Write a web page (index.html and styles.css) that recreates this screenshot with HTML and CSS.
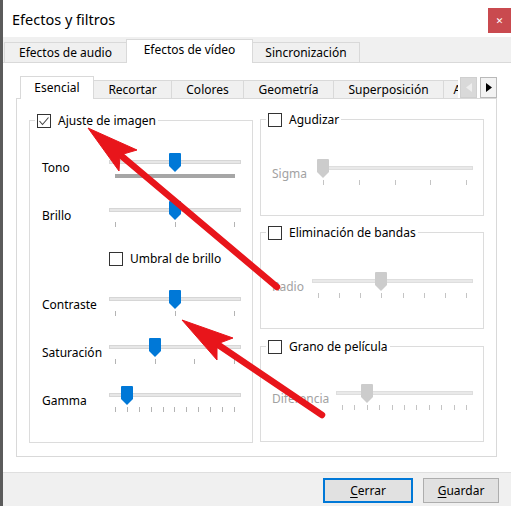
FILE: index.html
```html
<!DOCTYPE html>
<html lang="es">
<head>
<meta charset="utf-8">
<title>Efectos y filtros</title>
<link rel="stylesheet" href="styles.css">
</head>
<body>
<div class="win">
  <div class="titlebar">
    <span class="title">Efectos y filtros</span>
    <div class="close">&#x2715;</div>
  </div>
  <div class="tabs-top">
    <div class="ttab w-audio">Efectos de audio</div>
    <div class="ttab sel w-video">Efectos de vídeo</div>
    <div class="ttab w-sinc">Sincronización</div>
  </div>
  <div class="page">
    <div class="itabs">
      <div class="itab-strip">
        <div class="itab sel w-es">Esencial</div>
        <div class="itab w-rec">Recortar</div>
        <div class="itab w-col">Colores</div>
        <div class="itab w-geo">Geometría</div>
        <div class="itab w-sup">Superposición</div>
        <div class="itab w-atm">AtmoLight</div>
      </div>
      <div class="sbtn dis"><svg width="6" height="9" viewBox="0 0 6 9"><polygon points="6,0 6,9 0,4.5"/></svg></div>
      <div class="sbtn"><svg width="6" height="9" viewBox="0 0 6 9"><polygon points="0,0 0,9 6,4.5"/></svg></div>
    </div>
    <div class="pane">
      <div class="col-left">
        <div class="group g-main">
          <div class="legend">
            <span class="cb"><svg width="12" height="12" viewBox="0 0 12 12"><polyline points="1.5,6 4.5,9.5 10.5,2.5" fill="none" stroke="#444" stroke-width="1.1"/></svg></span>
            <span>Ajuste de imagen</span>
          </div>
          <div class="rows">
            <div class="srow">
              <span class="lbl">Tono</span>
              <div class="slider">
                <div class="groove"></div>
                <div class="ticks dense"></div>
                <svg class="handle" style="left:60px" viewBox="0 0 12 19"><path d="M1 0H11A1 1 0 0 1 12 1V13L6 19L0 13V1A1 1 0 0 1 1 0Z"/></svg>
              </div>
            </div>
            <div class="srow">
              <span class="lbl">Brillo</span>
              <div class="slider">
                <div class="groove"></div>
                <div class="ticks"><i></i><i></i><i></i></div>
                <svg class="handle" style="left:60px" viewBox="0 0 12 19"><path d="M1 0H11A1 1 0 0 1 12 1V13L6 19L0 13V1A1 1 0 0 1 1 0Z"/></svg>
              </div>
            </div>
            <div class="crow">
              <span class="cb"></span>
              <span>Umbral de brillo</span>
            </div>
            <div class="srow">
              <span class="lbl">Contraste</span>
              <div class="slider">
                <div class="groove"></div>
                <div class="ticks"><i></i><i></i><i></i></div>
                <svg class="handle" style="left:60px" viewBox="0 0 12 19"><path d="M1 0H11A1 1 0 0 1 12 1V13L6 19L0 13V1A1 1 0 0 1 1 0Z"/></svg>
              </div>
            </div>
            <div class="srow">
              <span class="lbl">Saturación</span>
              <div class="slider">
                <div class="groove"></div>
                <div class="ticks"><i></i><i></i><i></i><i></i></div>
                <svg class="handle" style="left:40px" viewBox="0 0 12 19"><path d="M1 0H11A1 1 0 0 1 12 1V13L6 19L0 13V1A1 1 0 0 1 1 0Z"/></svg>
              </div>
            </div>
            <div class="srow">
              <span class="lbl">Gamma</span>
              <div class="slider">
                <div class="groove"></div>
                <div class="ticks"><i></i><i></i><i></i><i></i><i></i><i></i><i></i><i></i><i></i><i></i><i></i></div>
                <svg class="handle" style="left:12px" viewBox="0 0 12 19"><path d="M1 0H11A1 1 0 0 1 12 1V13L6 19L0 13V1A1 1 0 0 1 1 0Z"/></svg>
              </div>
            </div>
          </div>
        </div>
      </div>
      <div class="col-right">
        <div class="group g-agu">
          <div class="legend"><span class="cb"></span><span>Agudizar</span></div>
          <div class="srow r">
            <span class="lbl dim w-sig">Sigma</span>
            <div class="slider off">
              <div class="groove"></div>
              <div class="ticks"><i></i><i></i><i></i><i></i><i></i></div>
              <svg class="handle" style="left:0px" viewBox="0 0 12 19"><path d="M1 0H11A1 1 0 0 1 12 1V13L6 19L0 13V1A1 1 0 0 1 1 0Z"/></svg>
            </div>
          </div>
        </div>
        <div class="group g-band">
          <div class="legend"><span class="cb"></span><span>Eliminación de bandas</span></div>
          <div class="srow r">
            <span class="lbl dim w-rad">Radio</span>
            <div class="slider off">
              <div class="groove"></div>
              <div class="ticks"><i></i><i></i><i></i><i></i><i></i><i></i><i></i><i></i></div>
              <svg class="handle" style="left:63px" viewBox="0 0 12 19"><path d="M1 0H11A1 1 0 0 1 12 1V13L6 19L0 13V1A1 1 0 0 1 1 0Z"/></svg>
            </div>
          </div>
        </div>
        <div class="group g-grano">
          <div class="legend"><span class="cb"></span><span>Grano de película</span></div>
          <div class="srow r">
            <span class="lbl dim w-dif">Diferencia</span>
            <div class="slider off">
              <div class="groove"></div>
              <div class="ticks"><i></i><i></i><i></i><i></i><i></i><i></i><i></i><i></i><i></i><i></i><i></i></div>
              <svg class="handle" style="left:25px" viewBox="0 0 12 19"><path d="M1 0H11A1 1 0 0 1 12 1V13L6 19L0 13V1A1 1 0 0 1 1 0Z"/></svg>
            </div>
          </div>
        </div>
      </div>
    </div>
  </div>
  <div class="footer">
    <div class="btn def"><span><u>C</u>errar</span></div>
    <div class="btn"><span><u>G</u>uardar</span></div>
  </div>
</div>
<svg class="arrows" width="511" height="506" viewBox="0 0 511 506">
  <g fill="#e8151b" stroke="#e8151b">
    <line x1="118" y1="153" x2="277" y2="287" stroke-width="6.5" stroke-linecap="round"/>
    <polygon points="88,128 137,150 120,155 119,171" stroke-width="1" stroke-linejoin="round"/>
    <line x1="214" y1="342" x2="322" y2="415" stroke-width="6.5" stroke-linecap="round"/>
    <polygon points="182,320 233,338 217,344 217,360" stroke-width="1" stroke-linejoin="round"/>
  </g>
</svg>
</body>
</html>
```
FILE: styles.css
```css
html, body {
  margin: 0;
  padding: 0;
}
body {
  position: relative;
  width: 511px;
  height: 506px;
  overflow: hidden;
  background: #fff;
  color: #000;
  font-family: "Noto Sans", "DejaVu Sans", sans-serif;
  font-size: 12px;
  line-height: 16px;
}
.win {
  height: 506px;
  box-sizing: border-box;
  border-left: 3px solid #5b5b5b;
  display: flex;
  flex-direction: column;
}
.titlebar {
  flex: none;
  height: 37px;
  display: flex;
  align-items: flex-start;
  background: #fff;
}
.title {
  margin: 8px 0 0 9px;
  font-size: 14.5px;
  line-height: 22px;
}
.close {
  margin: 8px 0 0 auto;
  width: 23px;
  height: 25px;
  background: #c94a4f;
  color: #fff;
  font-size: 9px;
  display: flex;
  align-items: center;
  justify-content: center;
}
.tabs-top {
  flex: none;
  height: 26px;
  box-sizing: border-box;
  border-bottom: 1px solid #d9d9d9;
  background: #f0f0f0;
  display: flex;
  align-items: flex-end;
  padding-left: 1px;
  position: relative;
  z-index: 1;
}
.ttab {
  height: 20px;
  box-sizing: border-box;
  border: 1px solid #d9d9d9;
  border-bottom: none;
  background: #f0f0f0;
  display: flex;
  align-items: center;
  justify-content: center;
}
.ttab + .ttab { margin-left: -1px; }
.ttab.sel {
  height: 24px;
  margin-bottom: -1px;
  padding-bottom: 3px;
  background: #fff;
  position: relative;
  z-index: 1;
}
.w-audio { width: 123px; }
.w-video { width: 127px; }
.w-sinc { width: 108px; }

.page {
  flex: 1;
  background: #fff;
  padding: 13px 14px 0 13px;
}
.itabs {
  height: 23px;
  display: flex;
  position: relative;
  z-index: 1;
}
.itab-strip {
  width: 443px;
  height: 23px;
  overflow: hidden;
  display: flex;
  align-items: flex-end;
  padding-left: 4px;
  box-sizing: border-box;
}
.itab {
  flex: none;
  height: 18px;
  margin-bottom: 1px;
  box-sizing: border-box;
  border: 1px solid #d9d9d9;
  border-bottom: none;
  background: #f0f0f0;
  display: flex;
  align-items: center;
  justify-content: center;
  white-space: nowrap;
}
.itab + .itab { margin-left: -1px; }
.itab.sel {
  height: 23px;
  margin-bottom: 0;
  padding-bottom: 1px;
  background: #fff;
  position: relative;
  z-index: 1;
}
.w-es { width: 74px; }
.w-rec { width: 79px; }
.w-col { width: 73px; }
.w-geo { width: 91px; }
.w-sup { width: 111px; }
.w-atm { width: 80px; }
.sbtn {
  flex: none;
  width: 17px;
  height: 21px;
  margin-top: 1px;
  margin-left: 3px;
  box-sizing: border-box;
  border: 1px solid #b9b9b9;
  background: #f3f3f3;
  display: flex;
  align-items: center;
  justify-content: center;
}
.sbtn svg { fill: #000; }
.sbtn.dis {
  margin-left: 2px;
  background: #d9d9d9;
  border-color: #cfcfcf;
}
.sbtn.dis svg { fill: #eeeeee; }

.pane {
  margin-top: -1px;
  height: 359px;
  box-sizing: border-box;
  border: 1px solid #d9d9d9;
  padding: 21px 12px 13px 12px;
  display: flex;
  gap: 7px;
}
.col-left, .col-right {
  width: 224px;
  display: flex;
  flex-direction: column;
}
.col-right { margin-top: -1px; }
.group {
  box-sizing: border-box;
  border: 1px solid #dcdcdc;
}
.g-main { flex: 1; }
.g-agu { height: 97px; }
.g-band { height: 97px; margin-top: 16px; }
.g-grano { height: 96px; margin-top: 17px; }
.legend {
  display: flex;
  align-items: center;
  gap: 7px;
  width: max-content;
  height: 16px;
  margin: -8px 0 0 5px;
  padding: 0 2px;
  background: #fff;
}
.cb {
  flex: none;
  width: 14px;
  height: 14px;
  box-sizing: border-box;
  border: 1px solid #333;
  background: #fff;
  display: flex;
}
.cb svg { display: block; margin: 0; }
.rows { margin-top: 24px; }
.srow {
  display: flex;
  align-items: flex-start;
  height: 48px;
  padding-left: 12px;
}
.srow.r {
  height: 26px;
  margin-top: 31px;
  padding-left: 11px;
  padding-right: 10px;
}
.g-grano .srow.r { margin-top: 29px; }
.lbl {
  flex: none;
  width: 67px;
  margin-top: 7px;
}
.lbl.dim { color: #a2a2a2; }
.w-sig { width: 45px; }
.w-rad { width: 40px; }
.w-dif { width: 64px; }
.crow {
  display: flex;
  gap: 7px;
  height: 41px;
  box-sizing: border-box;
  padding: 2px 0 0 79px;
  align-items: flex-start;
}
.crow .cb { margin-top: 1px; }
.slider {
  position: relative;
  width: 132px;
  height: 26px;
}
.srow.r .slider { flex: 1; width: auto; }
.groove {
  margin-top: 7px;
  height: 4px;
  box-sizing: border-box;
  border: 1px solid #d6d6d6;
  background: #e7e7e7;
}
.ticks {
  display: flex;
  justify-content: space-between;
  margin-top: 10px;
  padding: 0 6px;
  height: 5px;
}
.ticks i {
  display: block;
  width: 1px;
  height: 5px;
  background: #b4b4b4;
}
.ticks.dense {
  margin: 10px 6px 0 6px;
  padding: 0;
  height: 4px;
  background: #a6a6a6;
}
.handle {
  position: absolute;
  top: 0;
  width: 12px;
  height: 19px;
  fill: #0078d7;
}
.slider.off .handle { fill: #cccccc; }
.slider.off .groove { background: #e9e9e9; border-color: #dedede; }
.slider.off .ticks i { background: #c4c4c4; }

.footer {
  flex: none;
  height: 34px;
  box-sizing: border-box;
  border-top: 1px solid #dfdfdf;
  background: #f0f0f0;
  display: flex;
  justify-content: flex-end;
  gap: 10px;
  padding: 5px 12px 0 0;
}
.btn {
  width: 76px;
  height: 25px;
  box-sizing: border-box;
  border: 1px solid #adadad;
  background: #e1e1e1;
  display: flex;
  align-items: center;
  justify-content: center;
}
.btn.def {
  width: 90px;
  border: 2px solid #0078d7;
}
.btn u { text-decoration-thickness: 1px; text-underline-offset: 2px; }
.arrows {
  position: absolute;
  left: 0;
  top: 0;
  pointer-events: none;
}
```
